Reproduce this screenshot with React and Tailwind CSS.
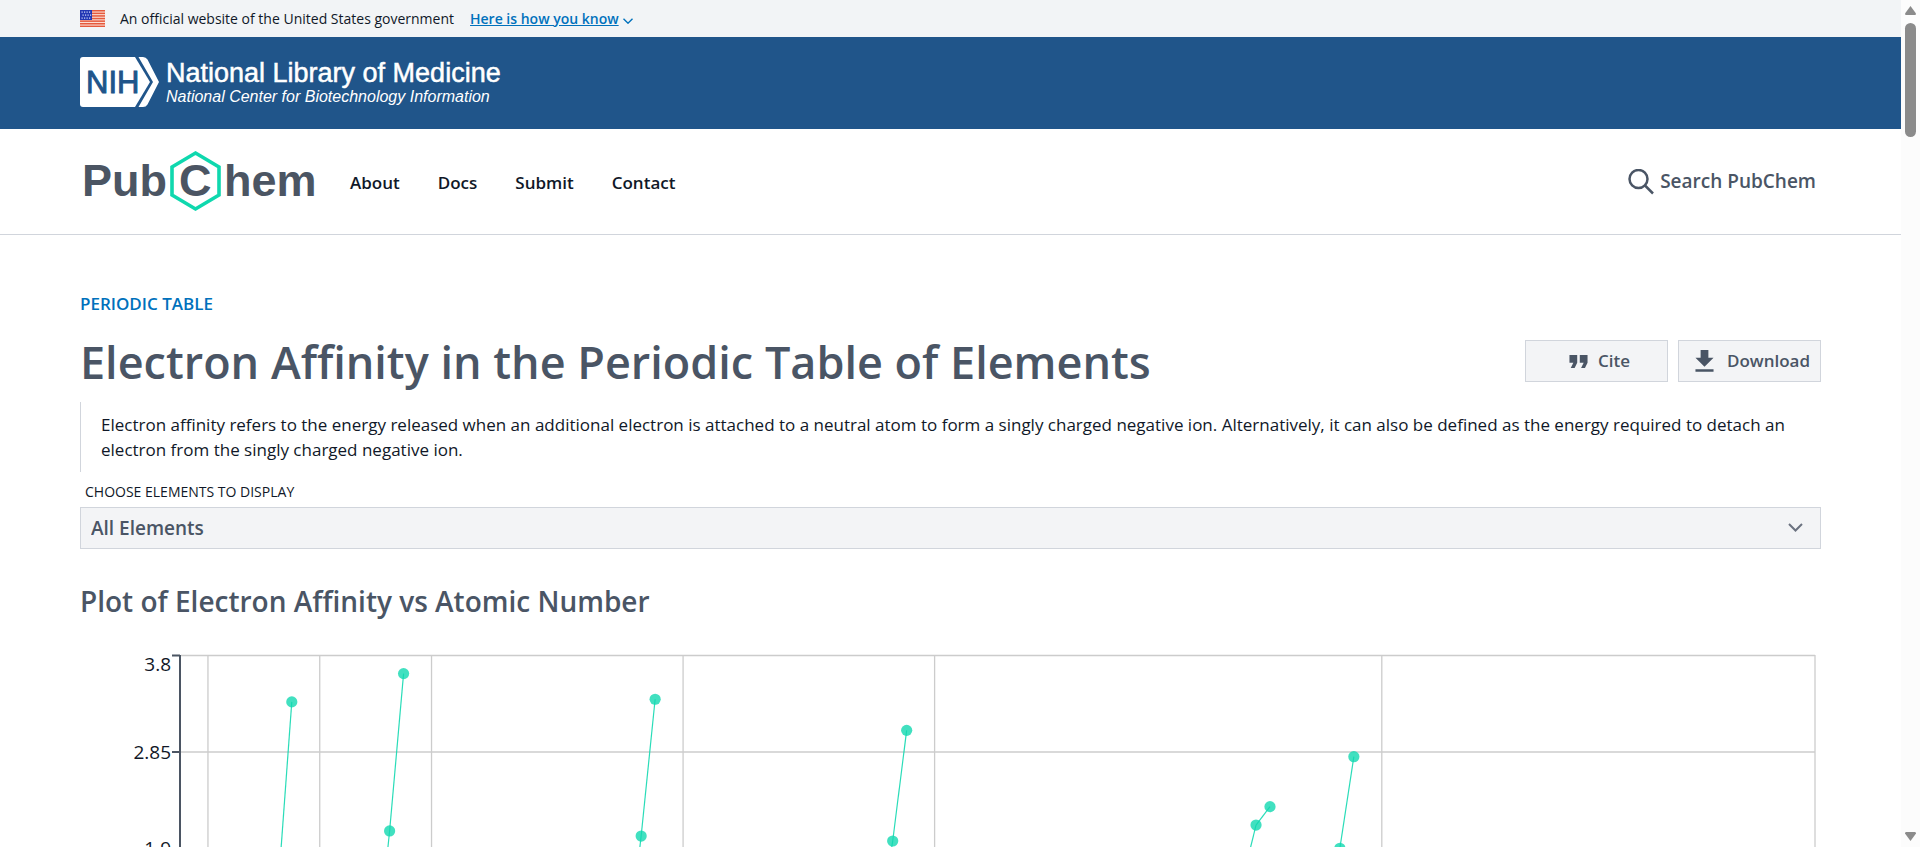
import React from "react";

const X_MAX = 117;
const Y_TOP = 3.8;
const PX_PER_EV = 101.7;

const gridTicks = [2, 10, 18, 36, 54, 86];

const series = [
  [[8, 1.462], [9, 3.339]],
  [[15, 0.746], [16, 2.07], [17, 3.617]],
  [[33, 0.81], [34, 2.02], [35, 3.365]],
  [[51, 1.07], [52, 1.971], [53, 3.059]],
  [[77, 1.565], [78, 2.128], [79, 2.309]],
  [[83, 0.946], [84, 1.9], [85, 2.8]],
];

const pct = (n) => `${(n / X_MAX) * 100}%`;
const px = (z) => pct(z - 1);
const py = (v) => (Y_TOP - v) * PX_PER_EV;

function Flag() {
  return (
    <svg className="h-[17px] w-[25px] shrink-0" viewBox="0 0 25 17" aria-hidden="true">
      <rect width="25" height="17" fill="#fbdcd3" />
      {[0, 1, 2, 3, 4, 5, 6].map((i) => (
        <rect key={i} y={i * 2.6} width="25" height="1.5" fill="#e5593c" />
      ))}
      <rect width="12" height="10" fill="#2337b4" />
      {[1.5, 4.5, 7.5].map((y, r) =>
        [1.5, 4, 6.5, 9].map((x) => (
          <rect key={`${x}-${y}`} x={x + (r % 2)} y={y} width="1.2" height="1.2" fill="#d5dcfa" />
        ))
      )}
    </svg>
  );
}

function NihLogo() {
  return (
    <svg className="h-[50px] w-[430px]" viewBox="0 0 430 50" role="img" aria-label="National Library of Medicine">
      <path d="M3 0H55L70 25L55 50H3Q0 50 0 47V3Q0 0 3 0Z" fill="#fff" />
      <path d="M58.500 0H63Q66 0 67.500 2.500L79 25L67.500 47.500Q66 50 63 50H58.500L73 25Z" fill="#fff" />
      <text x="6" y="36" fill="#20558a" stroke="#20558a" strokeWidth="0.9" fontFamily="Liberation Sans, Arial, sans-serif" fontSize="31">NIH</text>
      <text x="86" y="25" fill="#fff" stroke="#fff" strokeWidth="0.5" fontFamily="Liberation Sans, Arial, sans-serif" fontSize="27">National Library of Medicine</text>
      <text x="86" y="45" fill="#fff" fontStyle="italic" fontFamily="Liberation Sans, Arial, sans-serif" fontSize="16">National Center for Biotechnology Information</text>
    </svg>
  );
}

function PubChemLogo() {
  return (
    <svg className="h-[60px] w-[236px] overflow-visible" viewBox="0 0 236 60" role="img" aria-label="PubChem">
      <g fill="#4b5563" fontFamily="Liberation Sans, Arial, sans-serif" fontWeight="700" fontSize="45">
        <text x="2" y="44">Pub</text>
        <text x="99" y="44">C</text>
        <text x="144" y="44">hem</text>
      </g>
      <path d="M115.500 1L139 15V43L115.500 57L92 43V15Z" fill="none" stroke="#0fd8ae" strokeWidth="3.600" />
    </svg>
  );
}

function Chart() {
  return (
    <div className="mt-[34px] flex h-[420px] pr-[6px]">
      <svg className="h-full w-[100px] shrink-0 overflow-visible" aria-hidden="true">
        <g fill="#111827" fontSize="19" textAnchor="end">
          <text x="91" y="16">3.8</text>
          <text x="91" y="104">2.85</text>
          <text x="91" y="200">1.9</text>
        </g>
        <g stroke="#4b5563" strokeWidth="2">
          <path d="M92 0.500H100M92 97H100M92 193.500H100" />
          <path d="M100 0V420" />
        </g>
      </svg>
      <svg className="h-full min-w-0 flex-1 overflow-visible" role="img" aria-label="Electron affinity by atomic number">
        <g stroke="#ccc" strokeWidth="1.300">
          {[0.5, 97, 193.5].map((y) => (
            <line key={y} x1="1" x2="100%" y1={y} y2={y} />
          ))}
          {gridTicks.map((n) => (
            <line key={n} x1={pct(n)} x2={pct(n)} y1="0" y2="420" />
          ))}
          <line x1="100%" x2="100%" y1="0" y2="420" />
        </g>
        {series.map((points, s) => (
          <g key={s}>
            {points.slice(1).map(([z, v], i) => (
              <line key={z} x1={px(points[i][0])} y1={py(points[i][1])} x2={px(z)} y2={py(v)} stroke="#12d8b0" strokeWidth="1.200" strokeOpacity="0.9" />
            ))}
            {points.map(([z, v]) => (
              <circle key={z} cx={px(z)} cy={py(v)} r="5.600" fill="#12d8b0" fillOpacity="0.8" />
            ))}
          </g>
        ))}
      </svg>
    </div>
  );
}

export default function App() {
  return (
    <div className="flex h-screen overflow-hidden bg-white font-['Open_Sans','Noto_Sans',sans-serif] text-gray-900">
      <div className="min-w-0 flex-1 overflow-hidden">
        <div className="flex h-[37px] items-center bg-[#f2f4f6] px-20 text-sm">
          <Flag />
          <span className="ml-[15px]">An official website of the United States government</span>
          <button type="button" className="ml-4 flex items-center gap-1 text-[#0071bc]">
            <span className="font-semibold underline">Here is how you know</span>
            <svg className="mt-1 h-[6px] w-[10px]" viewBox="0 0 10 6" fill="none" stroke="currentColor" strokeWidth="1.400" aria-hidden="true">
              <path d="M0.500 0.700L5 5.200L9.500 0.700" />
            </svg>
          </button>
        </div>

        <div className="flex h-[92px] items-center bg-[#20558a] px-20 pb-[2px]">
          <a href="#nlm" className="block"><NihLogo /></a>
        </div>

        <header className="flex h-[106px] items-center justify-between border-b border-gray-300 pr-[85px] pl-20">
          <div className="flex items-center">
            <a href="#home"><PubChemLogo /></a>
            <nav className="ml-[34px] flex gap-[38px] pt-[2px] text-[17px] font-semibold text-gray-900">
              <a href="#about">About</a>
              <a href="#docs">Docs</a>
              <a href="#submit">Submit</a>
              <a href="#contact">Contact</a>
            </nav>
          </div>
          <button type="button" className="flex items-center gap-[6px] text-[19px] font-semibold text-gray-600">
            <svg className="size-[26px]" viewBox="0 0 26 26" fill="none" stroke="currentColor" strokeWidth="2.500" aria-hidden="true">
              <circle cx="10.500" cy="10" r="9" />
              <path d="M17 16.500L25 24.500" />
            </svg>
            Search PubChem
          </button>
        </header>

        <main className="px-20 pt-[57px]">
          <a href="#periodic-table" className="block text-[17px] leading-6 font-semibold text-[#0071bc]">PERIODIC TABLE</a>
          <div className="mt-[14px] flex items-center justify-between">
            <h1 className="text-[45px] leading-[64px] font-semibold text-gray-600">Electron Affinity in the Periodic Table of Elements</h1>
            <div className="flex gap-[10px] pb-[2px] text-[17px] font-semibold text-gray-600">
              <button type="button" className="flex h-[42px] w-[143px] items-center justify-center gap-1 border border-gray-300 bg-gray-100">
                <svg className="size-[31px]" viewBox="0 0 24 24" fill="currentColor" aria-hidden="true">
                  <path d="M6 17h3l2-4V7H5v6h3zm8 0h3l2-4V7h-6v6h3z" />
                </svg>
                Cite
              </button>
              <button type="button" className="flex h-[42px] w-[143px] items-center justify-between border border-gray-300 bg-gray-100 pr-[10px] pl-[10px]">
                <svg className="size-[31px]" viewBox="0 0 24 24" fill="currentColor" aria-hidden="true">
                  <path d="M19 9h-4V3H9v6H5l7 7 7-7zM5 18v2h14v-2z" />
                </svg>
                Download
              </button>
            </div>
          </div>
          <p className="mt-2 border-l border-gray-300 py-[10px] pr-5 pl-5 text-[17px] leading-[25px]">
            Electron affinity refers to the energy released when an additional electron is attached to a neutral atom to form a singly charged negative ion. Alternatively, it can also be defined as the energy required to detach an electron from the singly charged negative ion.
          </p>
          <label htmlFor="elements" className="mt-2 mb-[3px] block pl-[5px] text-sm leading-6">CHOOSE ELEMENTS TO DISPLAY</label>
          <div className="relative">
            <select id="elements" className="block h-[42px] w-full appearance-none border border-gray-300 bg-gray-100 px-[10px] text-[19px] font-semibold text-gray-600">
              <option>All Elements</option>
            </select>
            <svg className="pointer-events-none absolute top-[16px] right-[18px] h-[9px] w-[15px]" viewBox="0 0 15 9" fill="none" stroke="#6b7280" strokeWidth="2" aria-hidden="true">
              <path d="M1 1L7.500 7.500L14 1" />
            </svg>
          </div>
          <h2 className="mt-8 text-[28px] leading-10 font-semibold text-gray-600">Plot of Electron Affinity vs Atomic Number</h2>
          <Chart />
        </main>
      </div>

      <div className="flex w-[19px] shrink-0 flex-col items-center justify-between bg-[#fcfcfc] py-[6px]" aria-hidden="true">
        <div className="flex flex-col items-center gap-2">
          <svg className="h-[9px] w-[11px]" viewBox="0 0 11 9" fill="#8b8b8b"><path d="M5.500 0L11 7.500Q11 9 10 9H1Q0 9 0 7.500Z" /></svg>
          <div className="h-[114px] w-[11px] rounded-full bg-[#8b8b8b]" />
        </div>
        <svg className="h-[9px] w-[11px]" viewBox="0 0 11 9" fill="#8b8b8b"><path d="M5.500 9L11 1.500Q11 0 10 0H1Q0 0 0 1.500Z" /></svg>
      </div>
    </div>
  );
}
